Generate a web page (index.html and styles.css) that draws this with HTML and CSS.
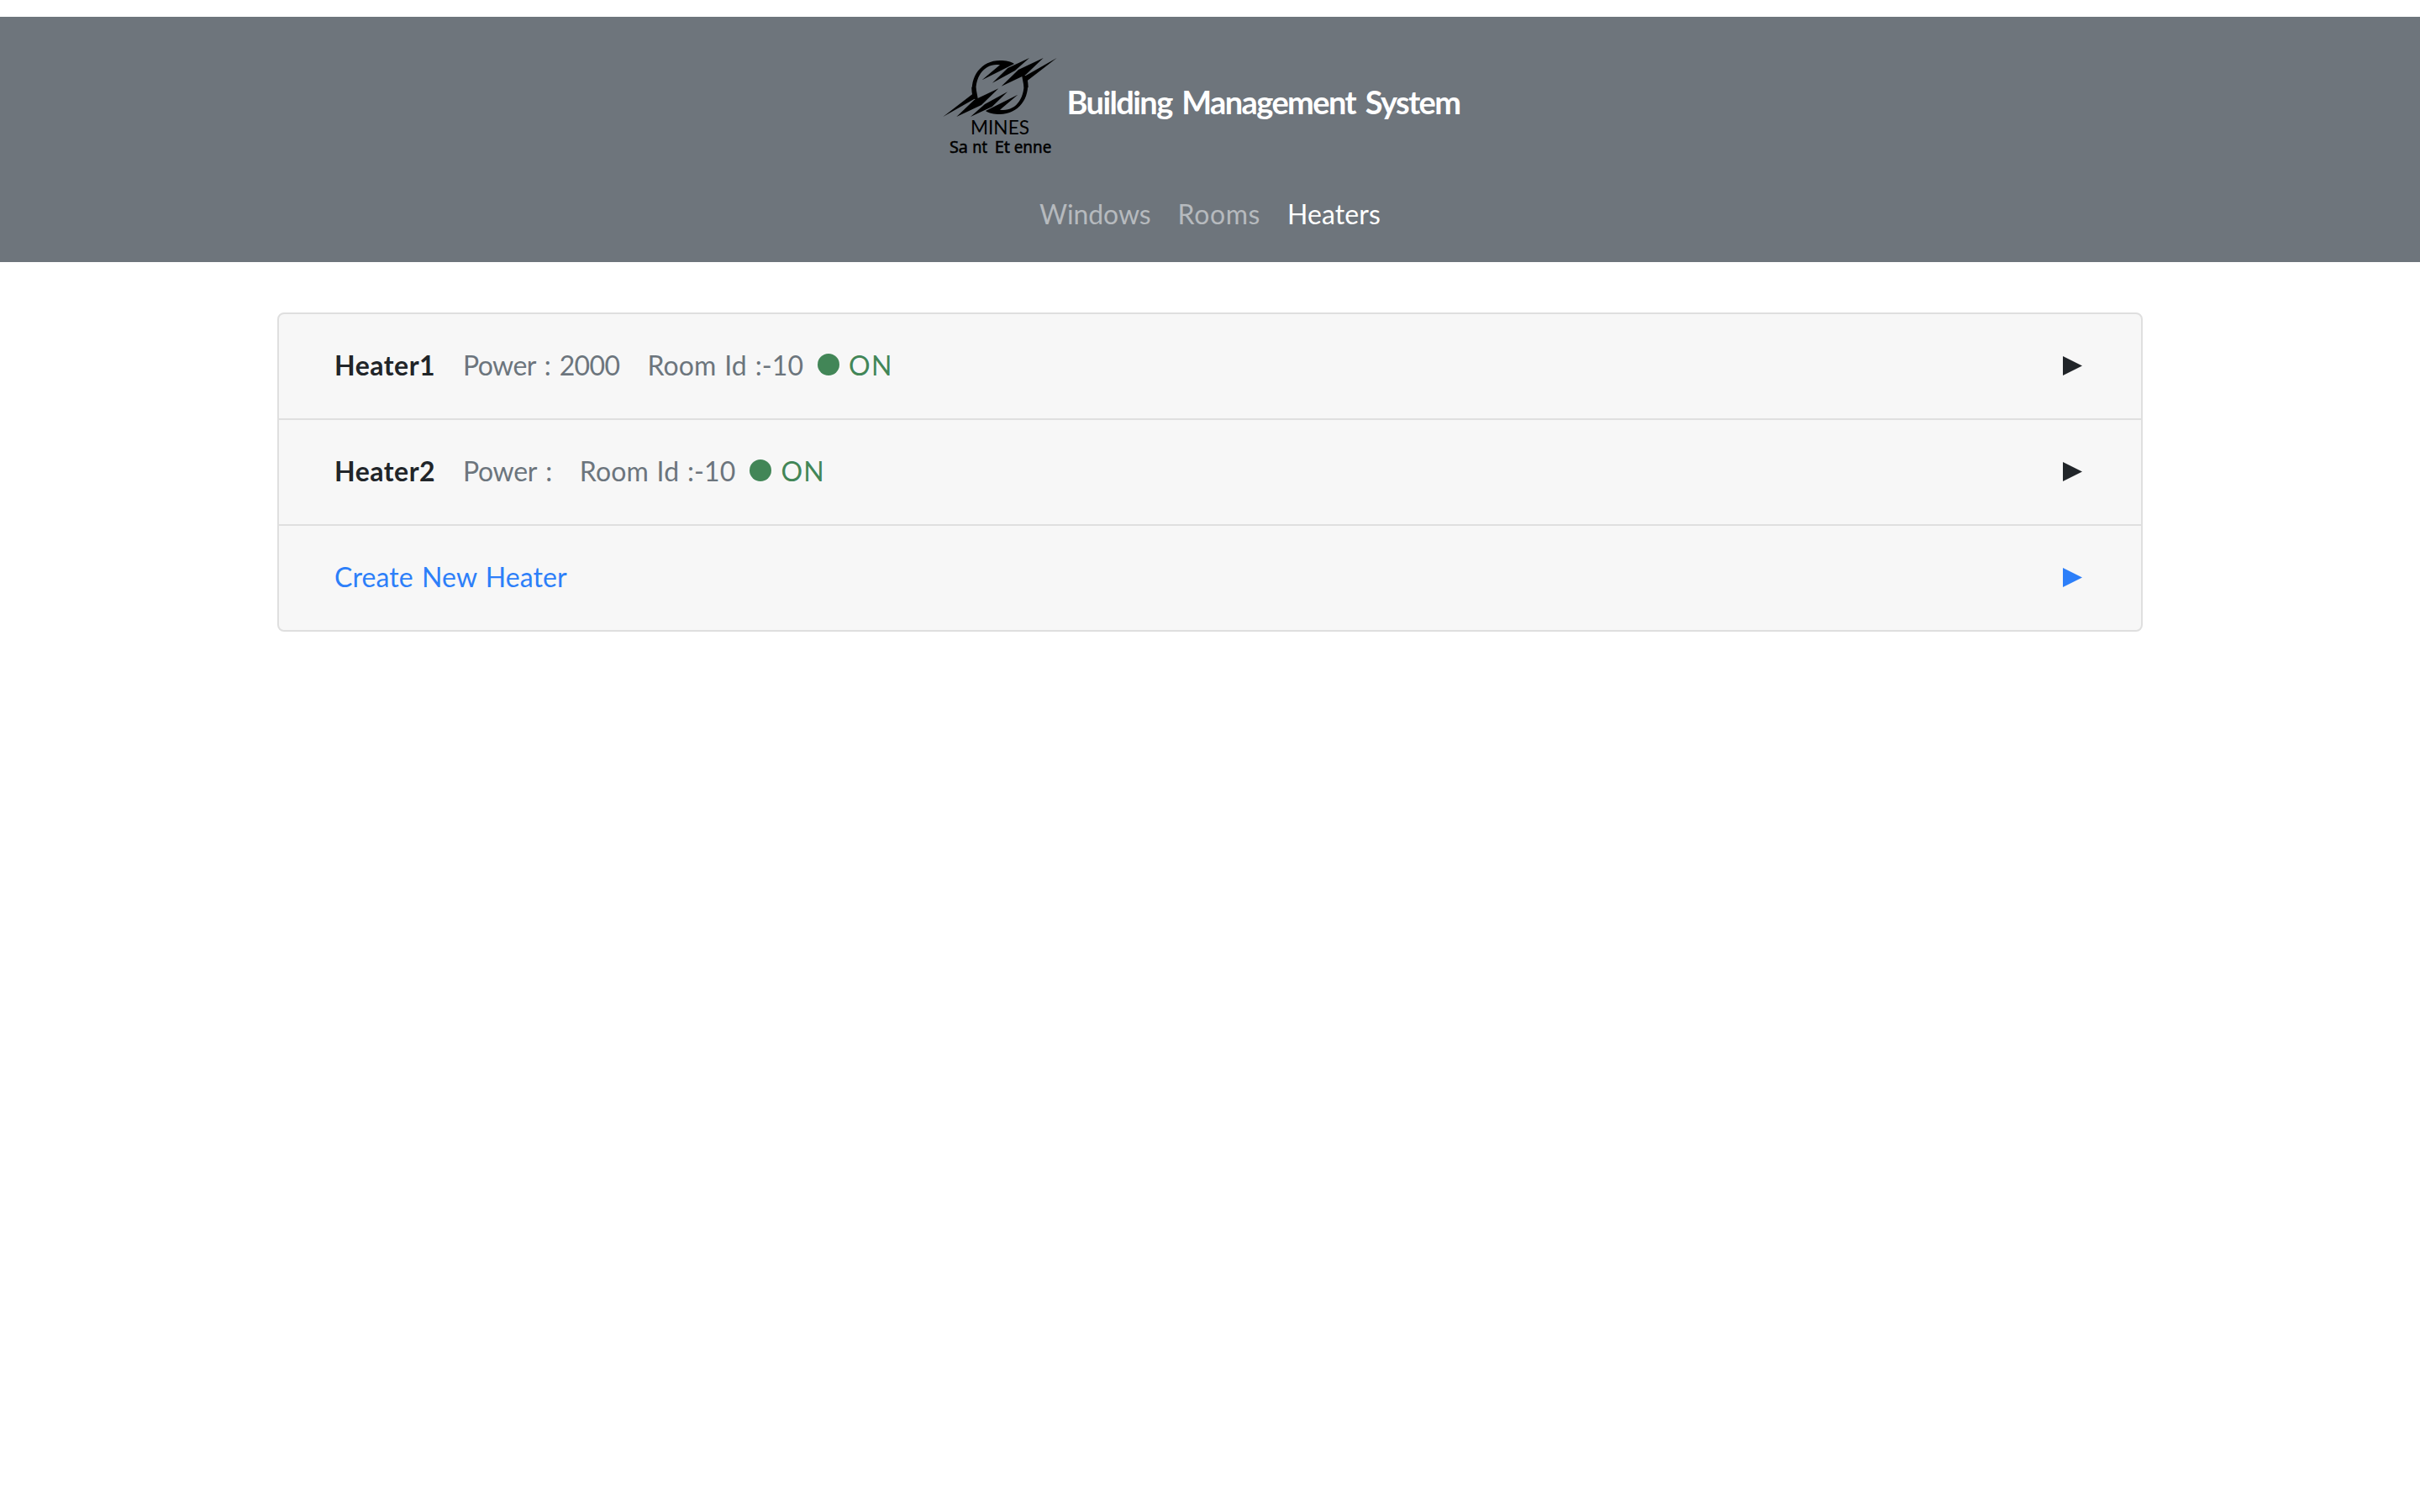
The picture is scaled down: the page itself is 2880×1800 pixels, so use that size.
FILE: index.html
```
<!DOCTYPE html>
<html lang="en">
<head>
<meta charset="utf-8">
<title>Building Management System</title>
<link rel="stylesheet" href="styles.css">
</head>
<body>
<header class="header">
  <div class="brand">
    <svg class="logo" viewBox="0 0 480 420" role="img" aria-label="MINES Saint Etienne">
      <defs>
        <g id="half">
          <path d="M142 176C131 108 174 51 240 51C262 51 280 55 291 63L176 121L240 67C190 58 145 104 156 180Z"/>
          <path d="M345 42L268 78L213 131L294 87Z"/>
          <path d="M395 42L306 84L245 143L332 102Z"/>
          <path d="M443 42L331 106L316 92L326 146L341 148L339 122Z"/>
        </g>
      </defs>
      <use href="#half"/>
      <use href="#half" transform="rotate(180 240 147)"/>
      <text class="mines" x="135" y="315" textLength="210" lengthAdjust="spacingAndGlyphs">MINES</text>
      <g class="city">
        <text x="60" y="380" textLength="66" lengthAdjust="spacingAndGlyphs">Sa</text>
        <text x="142" y="380" textLength="53" lengthAdjust="spacingAndGlyphs">nt</text>
        <text x="221" y="380" textLength="55" lengthAdjust="spacingAndGlyphs">Et</text>
        <text x="290" y="380" textLength="134" lengthAdjust="spacingAndGlyphs">enne</text>
      </g>
    </svg>
    <h1 class="title">Building Management System</h1>
  </div>
  <nav class="nav">
    <a class="nav-link windows">Windows</a>
    <a class="nav-link rooms">Rooms</a>
    <a class="nav-link active">Heaters</a>
  </nav>
</header>
<main class="card">
  <div class="row">
    <strong class="name">Heater1</strong>
    <span class="power">Power : 2000</span>
    <span class="room">Room Id :-10</span>
    <span class="status"><i class="dot"></i>ON</span>
    <svg class="arrow" viewBox="0 0 23 23"><path d="M0 0L23 11.5L0 23Z"/></svg>
  </div>
  <div class="row">
    <strong class="name">Heater2</strong>
    <span class="power empty">Power :</span>
    <span class="room">Room Id :-10</span>
    <span class="status"><i class="dot"></i>ON</span>
    <svg class="arrow" viewBox="0 0 23 23"><path d="M0 0L23 11.5L0 23Z"/></svg>
  </div>
  <div class="row create">
    <span>Create New Heater</span>
    <svg class="arrow" viewBox="0 0 23 23"><path d="M0 0L23 11.5L0 23Z"/></svg>
  </div>
</main>
</body>
</html>
```
FILE: styles.css
```
* { box-sizing: border-box; }
body {
  margin: 0;
  padding-top: 20px;
  background: #fff;
  color: #212529;
  font: 32px/40px Lato, sans-serif;
}
.header {
  height: 292px;
  padding-top: 35px;
  background: #6e757c;
}
.brand {
  display: flex;
  justify-content: center;
  align-items: center;
  height: 140px;
  padding-right: 33px;
}
.logo { width: 160px; height: 140px; flex: none; }
.mines { font: 71px Lato, sans-serif; }
.city { font: 58px "Noto Sans", sans-serif; stroke: #000; stroke-width: 1.5px; }
.title {
  margin: 0 0 8px;
  color: #fff;
  font-size: 38px;
  line-height: 46px;
  font-weight: 700;
  letter-spacing: -1.6px;
  word-spacing: 4px;
  white-space: nowrap;
}
.nav {
  display: flex;
  justify-content: center;
  gap: 32px;
  padding-top: 40px;
}
.nav-link { color: #b6babe; }
.windows { letter-spacing: -0.1px; }
.rooms { letter-spacing: 0.6px; }
.active { color: #fff; letter-spacing: 0.1px; }
.card {
  width: 2220px;
  margin: 60px auto 0;
  border: 2px solid #dfdfdf;
  border-radius: 8px;
  background: #f7f7f7;
  overflow: hidden;
}
.row {
  display: flex;
  align-items: center;
  height: 124px;
  padding: 0 70px 2px 66px;
}
.row + .row { height: 126px; border-top: 2px solid #dfdfdf; }
.name { width: 153px; letter-spacing: 0.5px; }
.power, .room { color: #6c757d; }
.power { margin-right: 33px; letter-spacing: -0.6px; word-spacing: 3px; }
.empty { letter-spacing: -0.35px; }
.room { margin-right: 17px; letter-spacing: 0.1px; word-spacing: 1.5px; }
.status {
  display: flex;
  align-items: center;
  color: #428657;
  letter-spacing: 1.2px;
}
.dot {
  width: 26px;
  height: 26px;
  margin: 0 11px 2px 0;
  border-radius: 50%;
  background: #428657;
}
.arrow { width: 23px; height: 23px; margin-left: auto; fill: currentColor; }
.create { color: #2d7ff9; letter-spacing: 0.1px; word-spacing: 2px; }
```
